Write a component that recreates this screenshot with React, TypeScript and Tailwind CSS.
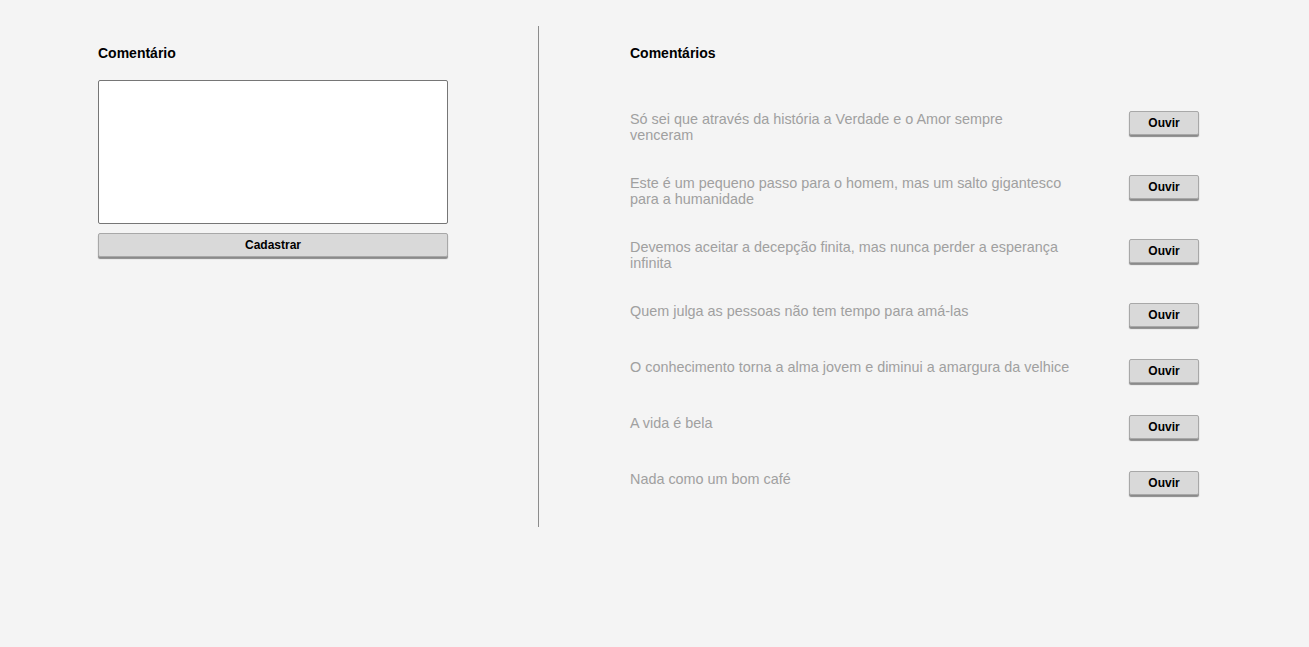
import { useState } from "react";

const frases = [
  "Só sei que através da história a Verdade e o Amor sempre\nvenceram",
  "Este é um pequeno passo para o homem, mas um salto gigantesco para a humanidade",
  "Devemos aceitar a decepção finita, mas nunca perder a esperança infinita",
  "Quem julga as pessoas não tem tempo para amá-las",
  "O conhecimento torna a alma jovem e diminui a amargura da velhice",
  "A vida é bela",
  "Nada como um bom café",
];

function App() {
  const [comentario, setComentario] = useState("");

  return (
    <div className="min-h-screen bg-[#f4f4f4] font-['Liberation_Sans',Arial,sans-serif] text-black">
      <div className="flex pl-[8px] pt-[26px]">
        <div className="w-[530px] pl-[90px] pt-[19px]">
          <h2 className="text-[14px] leading-[16px] font-bold">Comentário</h2>
          <textarea
            value={comentario}
            onChange={(e) => setComentario(e.target.value)}
            className="mt-[19px] block h-[144px] w-[350px] resize-none rounded-[2px] border border-[#767676] bg-white p-1 text-[14px] outline-none"
          />
          <button className="mt-[9px] block h-[24px] w-[350px] rounded-[2px] border border-[#a8a8a8] bg-[#d9d9d9] text-[12px] font-bold shadow-[0_2px_1px_#8a8a8a]">
            Cadastrar
          </button>
        </div>

        <div className="w-[661px] border-l border-[#8c8c8c] pl-[91px] pt-[19px]">
          <h2 className="mb-[50px] text-[14px] leading-[16px] font-bold">Comentários</h2>
          {frases.map((frase) => (
            <div key={frase} className="mb-8 flex w-[569px] items-start justify-between">
              <p className="w-[442px] whitespace-pre-line text-[14.4px] leading-[16px] text-[#a0a0a0]">{frase}</p>
              <button className="h-[24px] w-[70px] rounded-[2px] border border-[#a8a8a8] bg-[#d9d9d9] text-[12px] font-bold shadow-[0_2px_1px_#8a8a8a]">
                Ouvir
              </button>
            </div>
          ))}
        </div>
      </div>
    </div>
  );
}

export default App;
